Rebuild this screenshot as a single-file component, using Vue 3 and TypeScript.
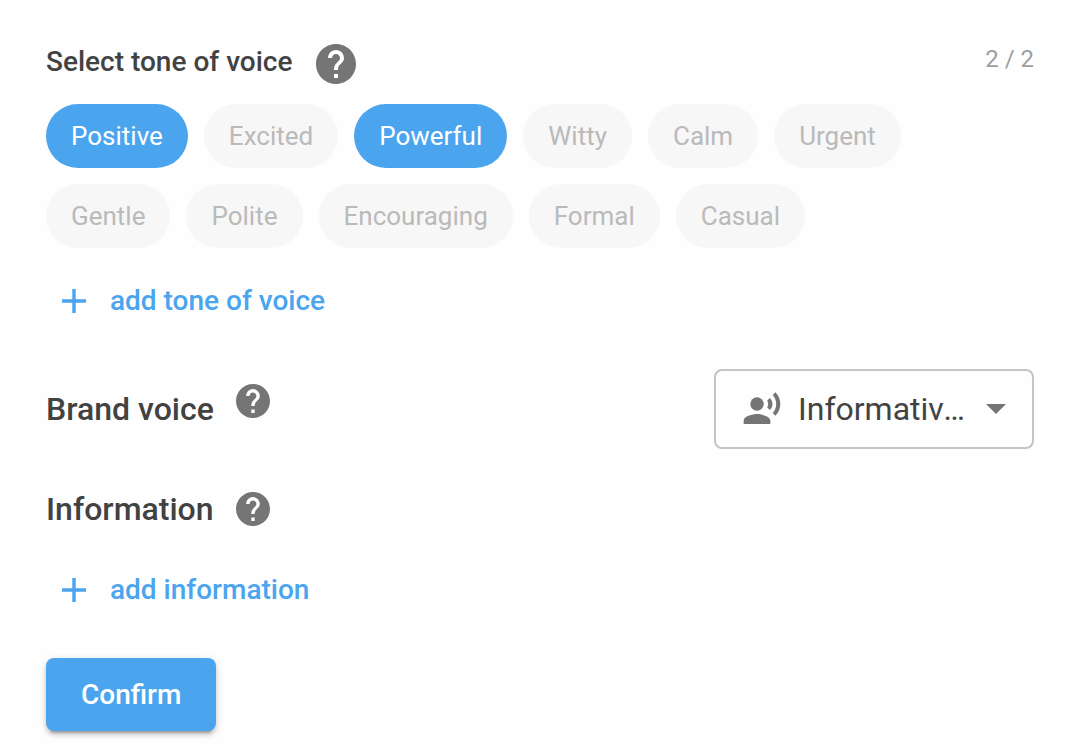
<script setup lang="ts">
import { computed, ref } from 'vue'

const maxTones = 2
const tones = ['Positive', 'Excited', 'Powerful', 'Witty', 'Calm', 'Urgent', 'Gentle', 'Polite', 'Encouraging', 'Formal', 'Casual']
const selected = ref<string[]>(['Positive', 'Powerful'])
const brandVoice = ref('informative')
const counter = computed(() => `${selected.value.length} / ${maxTones}`)

const helpPath =
  'M12 2C6.48 2 2 6.48 2 12s4.48 10 10 10 10-4.48 10-10S17.52 2 12 2zm1 17h-2v-2h2v2zm2.07-7.75l-.9.92C13.45 12.9 13 13.5 13 15h-2v-.5c0-1.1.45-2.1 1.17-2.83l1.24-1.26c.37-.36.59-.86.59-1.41 0-1.1-.9-2-2-2s-2 .9-2 2H8c0-2.21 1.79-4 4-4s4 1.79 4 4c0 .88-.36 1.68-.93 2.25z'

function toggleTone(tone: string) {
  if (selected.value.includes(tone)) {
    selected.value = selected.value.filter((t) => t !== tone)
  } else if (selected.value.length < maxTones) {
    selected.value = [...selected.value, tone]
  }
}
</script>

<template>
  <form class="panel" @submit.prevent>
    <section>
      <header class="tone-head">
        <h2 id="tone-title" class="title">Select tone of voice</h2>
        <button type="button" class="help help-large" aria-label="Help with tone of voice">
          <svg viewBox="2 2 20 20" aria-hidden="true"><path :d="helpPath" /></svg>
        </button>
        <span class="counter">{{ counter }}</span>
      </header>
      <div class="chips" role="group" aria-labelledby="tone-title">
        <button
          v-for="tone in tones"
          :key="tone"
          type="button"
          class="chip"
          :class="{ active: selected.includes(tone) }"
          :aria-pressed="selected.includes(tone)"
          @click="toggleTone(tone)"
        >{{ tone }}</button>
      </div>
      <button type="button" class="add add-tone">
        <svg viewBox="5 5 14 14" aria-hidden="true"><path d="M19 13h-6v6h-2v-6H5v-2h6V5h2v6h6v2z" /></svg>
        <span>add tone of voice</span>
      </button>
    </section>

    <section class="brand">
      <div class="label-row">
        <label for="brand-voice" class="heading">Brand voice</label>
        <button type="button" class="help help-raised" aria-label="Help with brand voice">
          <svg viewBox="2 2 20 20" aria-hidden="true"><path :d="helpPath" /></svg>
        </button>
      </div>
      <div class="select-box">
        <svg class="voice-icon" viewBox="0 0 24 24" aria-hidden="true">
          <circle cx="9" cy="9" r="4" />
          <path d="M9 15c-2.67 0-8 1.34-8 4v2h16v-2c0-2.66-5.33-4-8-4zm7.76-9.64l-1.68 1.69c.84 1.18.84 2.71 0 3.89l1.68 1.69c2.02-2.02 2.02-5.07 0-7.27zM20.07 2l-1.63 1.63c2.77 3.02 2.77 7.56 0 10.74L20.07 16c3.9-3.89 3.91-9.95 0-14z" />
        </svg>
        <select id="brand-voice" v-model="brandVoice">
          <option value="informative">Informative voice</option>
        </select>
        <svg class="arrow" viewBox="7 10 10 5" aria-hidden="true"><path d="M7 10l5 5 5-5z" /></svg>
      </div>
    </section>

    <section class="info">
      <div class="label-row">
        <h2 class="heading">Information</h2>
        <button type="button" class="help" aria-label="Help with information">
          <svg viewBox="2 2 20 20" aria-hidden="true"><path :d="helpPath" /></svg>
        </button>
      </div>
      <button type="button" class="add add-info">
        <svg viewBox="5 5 14 14" aria-hidden="true"><path d="M19 13h-6v6h-2v-6H5v-2h6V5h2v6h6v2z" /></svg>
        <span>add information</span>
      </button>
    </section>

    <button type="submit" class="confirm">Confirm</button>
  </form>
</template>

<style>
body {
  margin: 0;
  background: #fefefe;
}
</style>

<style scoped>
.panel {
  box-sizing: border-box;
  padding: 44px 46px 16px;
  font-family: Roboto, "Liberation Sans", sans-serif;
  color: #424242;
}
button,
select {
  font-family: inherit;
  border: 0;
  margin: 0;
  cursor: pointer;
}
svg {
  display: block;
  fill: currentColor;
}
.title,
.heading {
  margin: 0;
  font-weight: 500;
}
.title {
  font-size: 28px;
  line-height: 36px;
}
.heading {
  font-size: 32px;
  line-height: 40px;
}
.tone-head {
  display: flex;
  align-items: flex-start;
  gap: 24px;
  height: 60px;
}
.counter {
  margin-left: auto;
  font-size: 24px;
  line-height: 30px;
  color: #9e9e9e;
}
.help {
  width: 34px;
  height: 34px;
  padding: 0;
  border-radius: 50%;
  background: none;
  color: #757575;
}
.help-large {
  width: 40px;
  height: 40px;
}
.help-raised {
  margin-bottom: 16px;
}
.chips {
  display: flex;
  flex-wrap: wrap;
  gap: 16px;
}
.chip {
  height: 64px;
  padding: 0 25px;
  border-radius: 32px;
  background: #f7f7f7;
  color: #bababa;
  font-size: 26px;
  line-height: 32px;
}
.chip.active {
  background: #4ba5ee;
  color: #fff;
}
.add {
  display: flex;
  align-items: center;
  gap: 24px;
  padding: 0 16px;
  background: none;
  color: #4ba5ee;
  font-size: 28px;
  font-weight: 500;
  line-height: 48px;
}
.add svg {
  width: 24px;
  height: 24px;
}
.add-tone {
  margin-top: 29px;
}
.add-info {
  margin-top: 37px;
}
.brand {
  display: flex;
  align-items: center;
  justify-content: space-between;
  gap: 24px;
  margin-top: 44px;
}
.label-row {
  display: flex;
  align-items: center;
  gap: 22px;
}
.select-box {
  display: grid;
  grid-template-columns: 40px 1fr 20px;
  align-items: center;
  box-sizing: border-box;
  width: 320px;
  height: 80px;
  padding: 0 26px;
  border: 2px solid #c4c4c4;
  border-radius: 8px;
  color: #757575;
}
.voice-icon {
  grid-area: 1 / 1;
  width: 40px;
  height: 40px;
}
.arrow {
  grid-area: 1 / 3;
  width: 20px;
  height: 10px;
}
.select-box svg {
  pointer-events: none;
}
.select-box select {
  grid-area: 1 / 1 / 2 / 4;
  width: 100%;
  height: 76px;
  padding: 0 34px 0 56px;
  appearance: none;
  background: none;
  color: #424242;
  font-size: 32px;
  text-overflow: ellipsis;
  white-space: nowrap;
  overflow: hidden;
}
.info {
  margin-top: 40px;
}
.confirm {
  margin-top: 44px;
  padding: 16px 35px;
  border-radius: 8px;
  background: #4ba5ee;
  color: #fff;
  font-size: 28px;
  font-weight: 500;
  line-height: 41px;
  box-shadow: 0 6px 2px -4px rgba(0, 0, 0, 0.2), 0 4px 4px rgba(0, 0, 0, 0.14), 0 2px 10px rgba(0, 0, 0, 0.12);
}
</style>
